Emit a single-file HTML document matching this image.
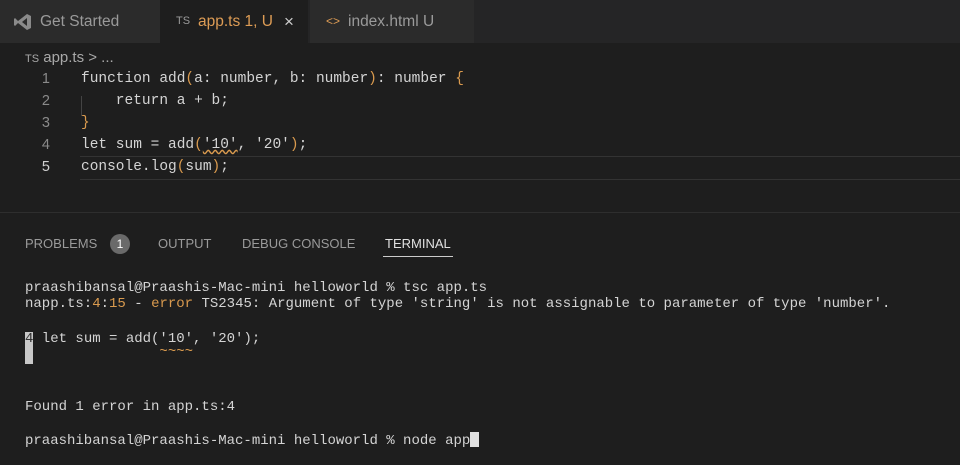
<!DOCTYPE html>
<html><head><style>
body{margin:0;width:960px;height:465px;background:#1e1e1e;overflow:hidden;font-family:"Liberation Sans",sans-serif;position:relative}
.tabs{position:absolute;left:0;top:0;width:960px;height:43px;background:#252526}
.tab{position:absolute;top:0;height:43px;line-height:43px;font-size:15.5px;color:#9a9a9a}
.code{position:absolute;left:81px;font-size:14.5px;color:#d4d4d4;white-space:pre;font-family:"Liberation Mono",monospace}
.ln{position:absolute;left:30px;width:20px;text-align:right;font-size:14.5px;color:#8a8a8a;font-family:"Liberation Sans",sans-serif}
.o{color:#d99a4e}
.t{position:absolute;left:25px;font-size:14px;color:#d4d4d4;white-space:pre;font-family:"Liberation Mono",monospace}
.pt{position:absolute;top:236px;font-size:13px;color:#9a9a9a}
</style></head><body>
<div class="tabs">
 <div class="tab" style="left:0;width:160px;background:#2b2b2b">
  <svg style="position:absolute;left:14px;top:13px" width="18" height="18" viewBox="0 0 18 18"><path d="M13 1 L17 3 V15 L13 17 L4 10 L1 13 L0 12 V6 L1 5 L4 8 Z M13 5 L8 9 L13 13 Z" fill="#8a8a8a"/></svg>
  <span style="position:absolute;left:40px">Get Started</span></div>
 <div class="tab" style="left:160px;width:148px;background:#1e1e1e">
  <span style="position:absolute;left:16px;font-size:11px;color:#9a9a9a">TS</span>
  <span style="position:absolute;left:38px;color:#dd9c55">app.ts 1, U</span>
  <span style="position:absolute;left:124px;color:#cfcfcf;font-size:17px">×</span></div>
 <div class="tab" style="left:310px;width:164px;background:#2b2b2b">
  <span style="position:absolute;left:16px;color:#dd9c55;font-size:12px">&lt;&gt;</span>
  <span style="position:absolute;left:38px">index.html <span>U</span></span></div>
</div>
<div style="position:absolute;left:25px;top:49px;font-size:15px;color:#a8a8a8"><span style="font-size:11px">TS</span> app.ts &gt; ...</div>
<div class="ln" style="top:71px">1</div><div class="ln" style="top:93px">2</div><div class="ln" style="top:115px">3</div><div class="ln" style="top:137px">4</div><div class="ln" style="top:159px;color:#d0d0d0">5</div>
<div style="position:absolute;left:81px;top:96px;width:1px;height:20px;background:#444"></div>
<div style="position:absolute;left:80px;top:156px;width:880px;height:22px;border-top:1px solid #333;border-bottom:1px solid #333"></div>
<div class="code" style="top:71px">function add<span class="o">(</span>a: number, b: number<span class="o">)</span>: number <span class="o">{</span></div>
<div class="code" style="top:93px">    return a + b;</div>
<div class="code" style="top:115px"><span class="o">}</span></div>
<div class="code" style="top:137px">let sum = add<span class="o">(</span><span style="text-decoration:underline wavy #d99a4e">'10'</span>, '20'<span class="o">)</span>;</div>
<div class="code" style="top:159px">console.log<span class="o">(</span>sum<span class="o">)</span>;</div>
<div style="position:absolute;left:0;top:212px;width:960px;height:1px;background:#2e2e2e"></div>
<div class="pt" style="left:25px">PROBLEMS</div>
<div style="position:absolute;left:110px;top:234px;width:20px;height:20px;border-radius:50%;background:#6a6a6a;color:#fff;font-size:12px;text-align:center;line-height:20px">1</div>
<div class="pt" style="left:158px">OUTPUT</div>
<div class="pt" style="left:242px">DEBUG CONSOLE</div>
<div class="pt" style="left:385px;color:#e0e0e0">TERMINAL</div>
<div style="position:absolute;left:383px;top:256px;width:70px;height:1px;background:#ccc"></div>
<div class="t" style="top:280px">praashibansal@Praashis-Mac-mini helloworld % tsc app.ts</div>
<div class="t" style="top:296px">napp.ts:<span class="o">4</span>:<span class="o">15</span> - <span class="o">error</span> TS2345: Argument of type 'string' is not assignable to parameter of type 'number'.</div>
<div style="position:absolute;left:25px;top:332px;width:8px;height:32px;background:#c8c8c8"></div>
<div class="t" style="top:331px"><span style="color:#333">4</span> let sum = add('10', '20');</div>
<div class="t" style="top:344px;color:#d99a4e">                ~~~~</div>
<div class="t" style="top:399px">Found 1 error in app.ts:4</div>
<div class="t" style="top:432px">praashibansal@Praashis-Mac-mini helloworld % node app<span style="display:inline-block;width:9px;height:15px;background:#e0e0e0;vertical-align:-3px"></span></div>
</body></html>
